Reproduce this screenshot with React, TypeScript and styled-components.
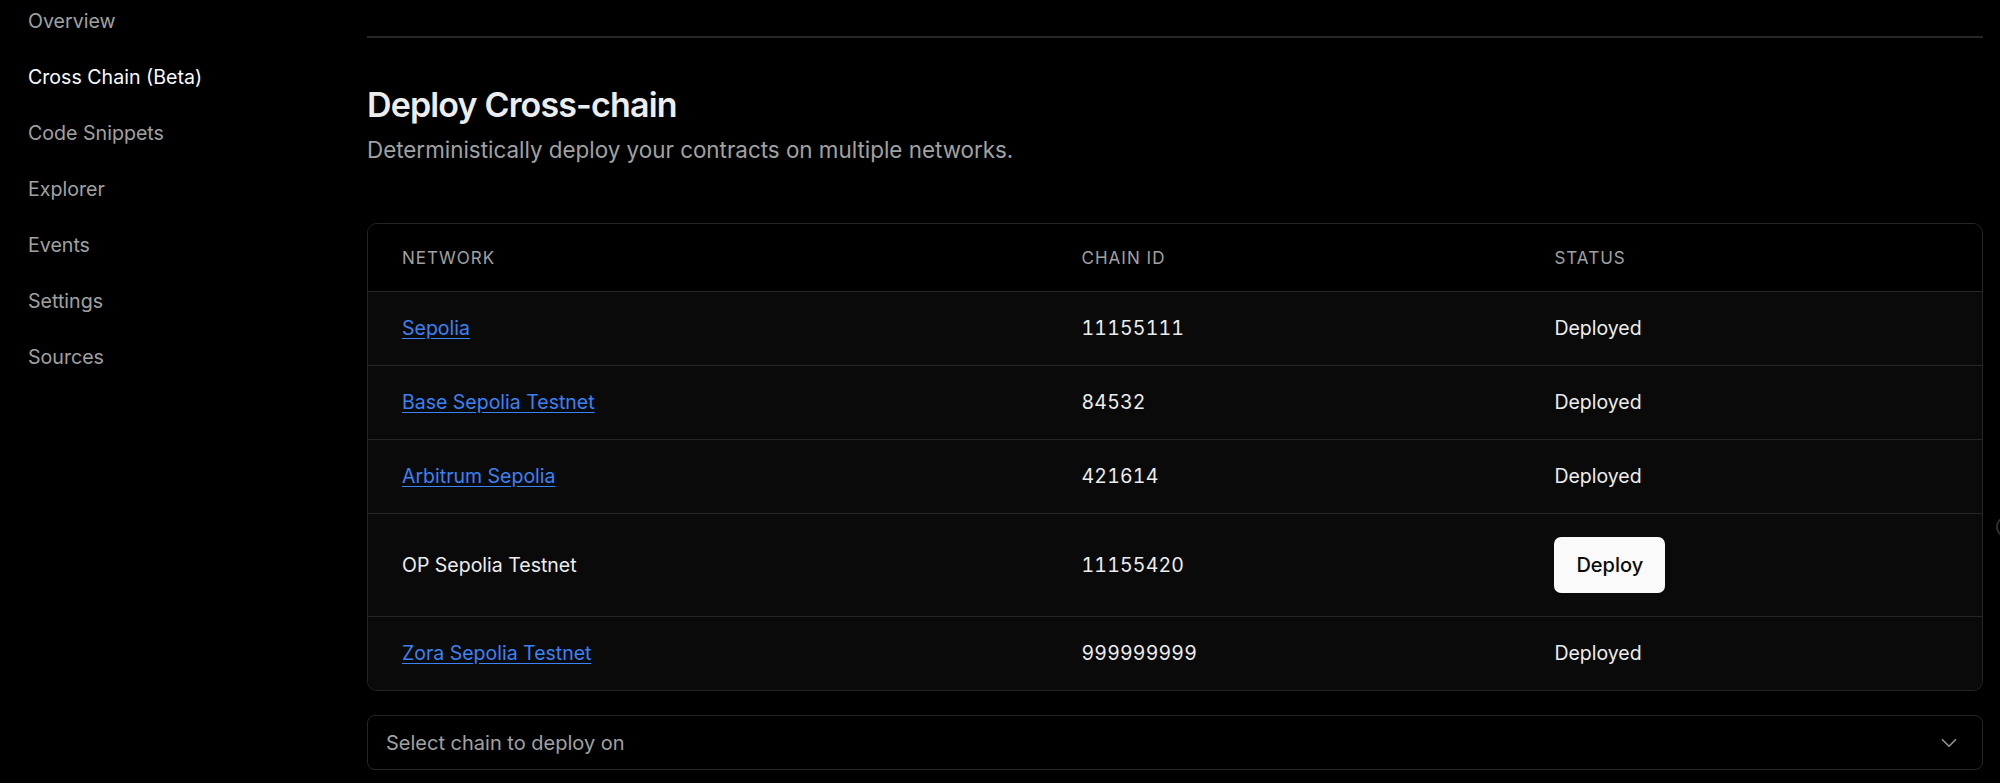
import React from 'react';
import styled, { createGlobalStyle } from 'styled-components';
import { ChevronDown } from 'lucide-react';

const GlobalStyle = createGlobalStyle`
  html, body {
    margin: 0;
    padding: 0;
    background: #000000;
    overflow: hidden;
  }
  body {
    font-family: Inter, 'Noto Sans', 'Liberation Sans', sans-serif;
    color: #ededed;
  }
  * {
    box-sizing: border-box;
  }
`

type Chain = {
    name: string;
    id: string;
    deployed: boolean;
}

const CHAINS: Chain[] = [
    { name: 'Sepolia', id: '11155111', deployed: true },
    { name: 'Base Sepolia Testnet', id: '84532', deployed: true },
    { name: 'Arbitrum Sepolia', id: '421614', deployed: true },
    { name: 'OP Sepolia Testnet', id: '11155420', deployed: false },
    { name: 'Zora Sepolia Testnet', id: '999999999', deployed: true },
]

const NAV = ['Overview', 'Cross Chain (Beta)', 'Code Snippets', 'Explorer', 'Events', 'Settings', 'Sources']

const App = () => {
    return (
        <Page>
            <GlobalStyle />
            <Sidebar>
                {NAV.map(item => (
                    <NavItem key={item} active={item === 'Cross Chain (Beta)'}>{item}</NavItem>
                ))}
            </Sidebar>
            <Main>
                <Divider />
                <Title>Deploy Cross-chain</Title>
                <Subtitle>Deterministically deploy your contracts on multiple networks.</Subtitle>
                <TableShell>
                    <Table>
                        <thead>
                            <tr>
                                <HeadCell width="42.1%">Network</HeadCell>
                                <HeadCell width="29.3%">Chain ID</HeadCell>
                                <HeadCell>Status</HeadCell>
                            </tr>
                        </thead>
                        <tbody>
                            {CHAINS.map(chain => (
                                <Row key={chain.id}>
                                    <Cell>
                                        {chain.deployed
                                            ? <ChainLink href="#">{chain.name}</ChainLink>
                                            : chain.name}
                                    </Cell>
                                    <Cell numeric>{chain.id}</Cell>
                                    <Cell>
                                        {chain.deployed ? 'Deployed' : <DeployButton>Deploy</DeployButton>}
                                    </Cell>
                                </Row>
                            ))}
                        </tbody>
                    </Table>
                </TableShell>
                <SelectBox>
                    <span>Select chain to deploy on</span>
                    <ChevronDown size={26} strokeWidth={1.6} color="#8f8f8f" />
                </SelectBox>
            </Main>
            {/* edge of a floating control, mostly off screen */}
            <EdgeRing />
        </Page>
    )
}

export default App;

const Page = styled.div`
    position: relative;
    display: flex;
    width: 2000px;
    height: 783px;
    overflow: hidden;
`

const Sidebar = styled.nav`
    width: 367px;
    flex-shrink: 0;
    display: flex;
    flex-direction: column;
    gap: 28px;
    padding: 7px 0 0 28px;
`

const NavItem = styled.div<{ active?: boolean }>`
    font-size: 19.6px;
    line-height: 28px;
    color: ${p => (p.active ? '#fafafa' : '#a1a1a1')};
`

const Main = styled.main`
    flex: 1;
    padding: 36px 17px 0 0;
    display: flex;
    flex-direction: column;
`

const Divider = styled.div`
    height: 2px;
    background: #262626;
`

const Title = styled.h1`
    margin: 46px 0 0;
    font-size: 34px;
    line-height: 42px;
    font-weight: 600;
    letter-spacing: -0.025em;
    color: #ededed;
`

const Subtitle = styled.p`
    margin: 9px 0 0;
    font-size: 22.4px;
    line-height: 30px;
    color: #a1a1a1;
`

const TableShell = styled.div`
    margin-top: 58px;
    border: 1px solid #262626;
    border-radius: 10px;
    overflow: hidden;
`

const Table = styled.table`
    width: 100%;
    border-collapse: collapse;
    table-layout: fixed;
`

const HeadCell = styled.th<{ width?: string }>`
    width: ${p => p.width || 'auto'};
    text-align: left;
    padding: 20px 34px 19px;
    font-size: 17px;
    line-height: 28px;
    font-weight: 400;
    letter-spacing: 0.06em;
    text-transform: uppercase;
    color: #a1a1a1;
    background: #000000;
    border-bottom: 1px solid #262626;
`

const Row = styled.tr`
    background: #0a0a0a;
    & + & td {
        border-top: 1px solid #262626;
    }
`

const Cell = styled.td<{ numeric?: boolean }>`
    padding: 23px 34px;
    font-size: 19.5px;
    line-height: 27px;
    color: #ededed;
    vertical-align: middle;
    font-variant-numeric: ${p => (p.numeric ? 'tabular-nums' : 'normal')};
    letter-spacing: ${p => (p.numeric ? '0.01em' : 'normal')};
`

const ChainLink = styled.a`
    color: #3b82f6;
    text-decoration: underline;
    text-underline-offset: 3px;
`

const DeployButton = styled.button`
    height: 56px;
    padding: 0 22px;
    border: none;
    border-radius: 7px;
    background: #fafafa;
    color: #0a0a0a;
    font-family: inherit;
    font-size: 20px;
    font-weight: 500;
    cursor: pointer;
`

const SelectBox = styled.div`
    margin-top: 24px;
    height: 55px;
    display: flex;
    align-items: center;
    justify-content: space-between;
    padding: 0 20px 0 18px;
    border: 1px solid #262626;
    border-radius: 8px;
    font-size: 20px;
    color: #a1a1a1;
`

const EdgeRing = styled.div`
    position: absolute;
    left: 1996px;
    top: 516px;
    width: 22px;
    height: 22px;
    border-radius: 50%;
    border: 2px solid #2e2e2e;
`
